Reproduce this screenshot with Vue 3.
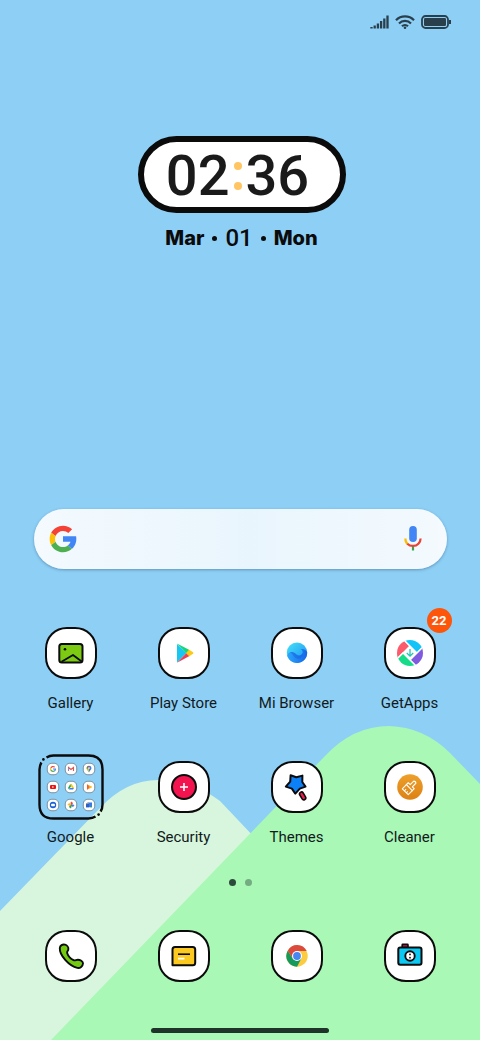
<script setup>
import { ref } from 'vue'

const query = ref('')
const page = ref(0)

const clock = { hours: '02', minutes: '36' }
const date = { month: 'Mar', day: '01', weekday: 'Mon' }

// outline shared by every app tile, 52x52
const tile =
  'M22 1H30C42 1 51 10 51 22V30C51 42 42 51 30 51H22C10 51 1 42 1 30V22C1 10 10 1 22 1Z'

const googleG = `
  <path fill="#f44336" d="M6.3 14.7l6.6 4.8C14.700 15.100 19 12 24 12c3.100 0 5.800 1.200 8 3l5.700-5.700C34 6 29.300 4 24 4 16.300 4 9.700 8.300 6.300 14.700z"/>
  <path fill="#4caf50" d="M24 44c5.200 0 9.900-2 13.400-5.200l-6.200-5.200C29.200 35.100 26.700 36 24 36c-5.200 0-9.600-3.300-11.300-7.900l-6.500 5C9.500 39.600 16.200 44 24 44z"/>
  <path fill="#fbc108" d="M6.300 14.700C4.800 17.400 4 20.600 4 24s.8 6.400 2.200 9.100l6.500-5c-.5-1.300-.7-2.700-.7-4.100 0-1.600.3-3.100.9-4.500z"/>
  <path fill="#4285f4" d="M43.600 20H24v8h11.300c-.8 2.200-2.200 4.200-4.100 5.600l6.200 5.200C37 39.200 44 34 44 24c0-1.300-.1-2.700-.4-4z"/>`

const apps = [
  {
    name: 'Gallery',
    art: `
      <rect x="14.300" y="17" width="23.200" height="18.500" rx="2.500" fill="#7ccb12" stroke="#0b0b0b" stroke-width="2"/>
      <circle cx="20" cy="22.200" r="1.300" fill="#0b0b0b"/>
      <path d="M16.500 34.800L28 28L37 34.800" fill="none" stroke="#0b0b0b" stroke-width="1.800" stroke-linejoin="round"/>`,
  },
  {
    name: 'Play Store',
    art: `
      <path fill="#18c6f2" d="M19 17v18.500L28.500 26z"/>
      <path fill="#15d67a" d="M19 16.600L31.500 23L28.500 26.300z"/>
      <path fill="#ef3d54" d="M19 35.800L31.500 29L28.500 26z"/>
      <path fill="#fdc912" d="M31.200 22.700L35 25.200Q35.800 26 35 26.800L31.200 29.300L28 26z"/>`,
  },
  {
    name: 'Mi Browser',
    art: `
      <defs>
        <linearGradient id="mi-a" x1="0" y1="0" x2="1" y2="1"><stop offset="0" stop-color="#45e3f7"/><stop offset="1" stop-color="#1b8df5"/></linearGradient>
        <linearGradient id="mi-b" x1="0" y1="0" x2="1" y2="0"><stop offset="0" stop-color="#2aa8fb"/><stop offset="1" stop-color="#1763e8"/></linearGradient>
      </defs>
      <circle cx="26" cy="25.700" r="10.200" fill="url(#mi-a)"/>
      <path d="M16.200 28.500C18 24 22 24.500 24.500 26.500C26 28 28 29 30 28C32.800 26.500 32 22.500 29 22C33.500 21.500 36 23.500 36.200 25.700C36.200 31.500 31.500 35.900 26 35.900C21.500 35.900 17.500 33 16.200 28.500Z" fill="url(#mi-b)"/>
      <path d="M19 25.200C22 24.500 24 26.800 26 28.200C28 29.200 31 28.500 31.500 25.500C32.500 29.500 29.500 32.500 26 31.500C22.500 30.500 22.500 27 19 25.200Z" fill="#1a5fe0" opacity=".5"/>`,
  },
  {
    name: 'GetApps',
    badge: 22,
    art: `
      <defs><clipPath id="get-c"><circle r="13"/></clipPath></defs>
      <g transform="translate(26 26)">
        <g clip-path="url(#get-c)" stroke="#fff" stroke-width="1.400">
          <path fill="#fb5b6b" d="M0-7L-7 0L-13 6H-20V-20H-13Z"/>
          <path fill="#10c4f7" transform="rotate(90)" d="M0-7L-7 0L-13 6H-20V-20H-13Z"/>
          <path fill="#7f5be0" transform="rotate(180)" d="M0-7L-7 0L-13 6H-20V-20H-13Z"/>
          <path fill="#16dc8a" transform="rotate(270)" d="M0-7L-7 0L-13 6H-20V-20H-13Z"/>
        </g>
        <path d="M0-4V3M-3.200 0L0 3.200L3.200 0" fill="none" stroke="#1fc7b6" stroke-width="1.300"/>
      </g>`,
  },
  { name: 'Google', folder: true },
  {
    name: 'Security',
    art: `
      <circle cx="26" cy="26" r="12" fill="#f2134f" stroke="#0b0b0b" stroke-width="2"/>
      <path d="M26 22V30M22 26H30" stroke="#fff" stroke-width="1.600"/>`,
  },
  {
    name: 'Themes',
    art: `
      <path d="M19.600 14.300L25.300 16.300L31.400 14.600L31.300 21L34.500 25.600L28.800 27.600L24.300 32.600L20.900 27.600L14.800 25.600L19.200 20.600Z" fill="#0c80f6" stroke="#0b0b0b" stroke-width="2" stroke-linejoin="round"/>
      <path d="M30.500 33L32.800 36.800" stroke="#0b0b0b" stroke-width="5.500" stroke-linecap="round"/>
      <path d="M30.500 33L32.800 36.800" stroke="#ee1c4e" stroke-width="2.400" stroke-linecap="round"/>`,
  },
  {
    name: 'Cleaner',
    art: `
      <defs><linearGradient id="cl" x1="0" y1="0" x2="0" y2="1"><stop offset="0" stop-color="#eda02b"/><stop offset="1" stop-color="#dd8113"/></linearGradient></defs>
      <circle cx="26" cy="26" r="12.800" fill="url(#cl)"/>
      <g transform="translate(25.500 26.500) rotate(45)" fill="none" stroke="#fff" stroke-width="1.100" stroke-linejoin="round">
        <path d="M-1.500-2.500V-7.500Q0-9 1.500-7.500V-2.500H4.200V.2H-4.200V-2.500Z"/>
        <path d="M-4.200 .2V6H4.200V.2M-1.300 6V3.500M1.500 6V4"/>
      </g>`,
  },
]

// contents of the Google folder, each drawn around its own centre
const folderItems = [
  `<g transform="scale(.15) translate(-24 -24)">${googleG}</g>`,
  '<path d="M-2.500 2V-1.500L0 .5L2.500-1.500V2" fill="none" stroke="#e0564c" stroke-width="1.100"/><path d="M-2.500 2V-1" stroke="#7b8fd8"/>',
  '<path d="M0 3.500C-.5 1.500-2.500 .8-2.500-1A2.500 2.500 0 0 1 0-3.300Z" fill="#2c9c55"/><path d="M0 3.500C.5 1.500 2.500 .8 2.500-1A2.500 2.500 0 0 0 0-3.300Z" fill="#3d7fee"/><path d="M-2.400-1.500L0-3.300V-1Z" fill="#e5483a"/><path d="M-2.300 0L0-1V3Z" fill="#f6bd19"/><circle cy="-.9" r=".8" fill="#fff"/>',
  '<rect x="-3" y="-2.100" width="6" height="4.200" rx="1" fill="#ee1212"/><path d="M-.7-1L1.100 0L-.7 1Z" fill="#fff"/>',
  '<path d="M-1-2.600H1L0-0.8L-2 2.600L-3 .9Z" fill="#1fa463"/><path d="M-1-2.600H1L3 .9H1Z" fill="#fbc70c"/><path d="M-2 2.600L-1 .9H3L2 2.600Z" fill="#3d7fee"/>',
  '<path d="M-2-2.800L3 0L-2 2.800Z" fill="#f68b1c"/><path d="M-2-2.800L0 0L-2 2.800Z" fill="#ef5a3c"/><path d="M.5-1.400L3 0L.5 1.400Z" fill="#fbc116"/>',
  '<circle r="3.200" fill="#1a62d8"/><rect x="-1.900" y="-1.200" width="3.800" height="2.400" rx=".8" fill="#fff"/>',
  '<path d="M0 0V-3A1.500 1.500 0 0 1 0 0Z" fill="#e8453c" stroke="#e8453c" stroke-width=".6"/><path d="M0 0H3A1.500 1.500 0 0 1 0 0Z" fill="#3d7fee" stroke="#3d7fee" stroke-width=".6"/><path d="M0 0V3A1.500 1.500 0 0 1 0 0Z" fill="#2ea350" stroke="#2ea350" stroke-width=".6"/><path d="M0 0H-3A1.500 1.500 0 0 1 0 0Z" fill="#fbbb10" stroke="#fbbb10" stroke-width=".6"/>',
  '<path d="M-3-1L-1-2.500H3V2.200H-3Z" fill="#3579ea"/><path d="M-3-1L-1-2.500L0-1V2.200H-3Z" fill="#2a5fc7"/><path d="M-2.600-.8L-.8-2.200L-.2-1.200Z" fill="#fbbb10"/><path d="M1.200 1.200H3V2.200H1.200Z" fill="#30a853"/>',
]

const dock = [
  {
    name: 'Phone',
    art: `<path d="M14.800 18C15 15.500 17.500 14 20 14.700C22 15.300 23.800 17.500 23.300 19.600C23 21.200 21.600 21.500 22.200 23.200C23.200 26 26 29 28.600 30.200C30.200 30.900 31 29.700 32.800 29.700C35 29.700 38.200 31.200 38 33.500C37.800 36.200 35.200 38.500 32.300 37.900C24.500 36.200 14.300 25.500 14.800 18Z" fill="#74c911" stroke="#0b0b0b" stroke-width="1.900"/>`,
  },
  {
    name: 'Messages',
    art: `
      <path d="M14.500 35.300V19.500Q14.500 17 17 17H34.700Q37.200 17 37.200 19.500V32.800Q37.200 35.300 34.700 35.300Z" fill="#fcc921" stroke="#0b0b0b" stroke-width="2" stroke-linejoin="round"/>
      <path d="M20 24.200H32" stroke="#0b0b0b" stroke-width="1.600"/>
      <path d="M20 28.600H26.500" stroke="#fff" stroke-width="1.800"/>`,
  },
  {
    name: 'Chrome',
    art: `
      <g transform="translate(26 26)">
        <circle r="10.700" fill="#fccb3f"/>
        <path d="M-9.270-5.350A10.700 10.700 0 0 1 9.700-5H0L-4.330 2.500Z" fill="#dc4a3e"/>
        <path d="M-9.270-5.350A10.700 10.700 0 0 0 0 10.700L4.330 2.500L-4.330 2.500Z" fill="#159a5b"/>
        <circle r="5" fill="#fff"/>
        <circle r="3.900" fill="#4886f2"/>
      </g>`,
  },
  {
    name: 'Camera',
    art: `
      <rect x="18.200" y="14.300" width="5.800" height="4" rx=".6" fill="#a3123f" stroke="#0b0b0b" stroke-width="1.600"/>
      <rect x="14.300" y="17.500" width="23.200" height="17.200" rx="2" fill="#0cc9f3" stroke="#0b0b0b" stroke-width="2"/>
      <circle cx="26" cy="26" r="4.700" fill="#fff" stroke="#0b0b0b" stroke-width="1.900"/>
      <circle cx="26" cy="24.400" r=".9" fill="#0b0b0b"/>
      <circle cx="26" cy="27.700" r=".9" fill="#0b0b0b"/>`,
  },
]
</script>

<template>
  <div class="home">
    <svg class="home__wallpaper" viewBox="0 0 480 1040" preserveAspectRatio="xMidYMax slice" aria-hidden="true">
      <rect width="480" height="1040" fill="#8ecff6" />
      <path fill="#d8f6dd" d="M0 911L100 808Q126 780 158 780Q192 780 220 801L290 875V1040H0Z" />
      <path fill="#a9f8b6" d="M51 1040L325 756Q353 726 389 726Q424 727 450 753L480 784V1040Z" />
    </svg>

    <header class="status">
      <svg width="19" height="14" viewBox="0 0 19 14" aria-label="Signal">
        <path
          d="M1.500 13.500V12M4.700 13.500V10.500M7.900 13.500V8.500M11.100 13.500V6M14.300 13.500V3.500M17.500 13.500V.5"
          stroke="#2a3f4c"
          stroke-width="2.300"
        />
      </svg>
      <svg width="20" height="14" viewBox="0 0 20 14" aria-label="Wi-Fi">
        <g fill="none" stroke="#2a3f4c" stroke-width="2.200">
          <path d="M1 5.200A12.500 12.500 0 0 1 19 5.200" />
          <path d="M4 8.400A8.300 8.300 0 0 1 16 8.400" />
          <path d="M7 11.200A4.300 4.300 0 0 1 13 11.200" />
        </g>
        <circle cx="10" cy="12.700" r="1.300" fill="#2a3f4c" />
      </svg>
      <svg width="31" height="14" viewBox="0 0 31 14" aria-label="Battery">
        <rect x="1" y="1" width="26" height="12" rx="3.500" fill="none" stroke="#2a3f4c" stroke-width="1.800" />
        <rect x="3" y="3" width="22" height="8" rx="1.200" fill="#2a3f4c" />
        <path d="M29 5V9" stroke="#2a3f4c" stroke-width="2" />
      </svg>
    </header>

    <section class="clock">
      <div class="clock__pill">
        <span>{{ clock.hours }}</span>
        <span class="clock__colon"><i></i><i></i></span>
        <span>{{ clock.minutes }}</span>
      </div>
      <p class="clock__date">
        <b>{{ date.month }}</b>
        <i></i>
        <span>{{ date.day }}</span>
        <i></i>
        <b>{{ date.weekday }}</b>
      </p>
    </section>

    <form class="search" @submit.prevent>
      <svg width="32" height="32" viewBox="0 0 48 48" aria-hidden="true" v-html="googleG"></svg>
      <input v-model="query" class="search__input" type="text" aria-label="Search" />
      <button class="search__mic" type="button" aria-label="Voice search">
        <svg width="20" height="28" viewBox="0 0 20 28" aria-hidden="true">
          <rect x="6.200" y="1" width="7.600" height="16" rx="3.800" fill="#4285f4" />
          <path d="M10 20V25.500" stroke="#34a853" stroke-width="2.200" />
          <path d="M2.400 13.500C2.400 16 3.300 18 4.600 19" fill="none" stroke="#fbbc05" stroke-width="2.200" />
          <path d="M4.300 18.700C7.300 21.700 12.700 21.700 15.400 18.700C16.800 17.200 17.600 15.500 17.600 13.500" fill="none" stroke="#ea4335" stroke-width="2.200" />
        </svg>
      </button>
    </form>

    <main class="apps">
      <button v-for="app in apps" :key="app.name" class="app" type="button">
        <span class="app__icon">
          <svg v-if="app.folder" width="66" height="66" viewBox="0 0 66 66" aria-hidden="true">
            <g fill="none" stroke="#0b0b0b" stroke-width="2.400">
              <path d="M8.500 3.400Q11.500 1.500 15.500 1.500H50.500Q64.500 1.500 64.500 15.500V50.500Q64.500 54.500 62.600 57.500" />
              <path d="M57.500 62.600Q54.500 64.500 50.500 64.500H15.500Q1.500 64.500 1.500 50.500V15.500Q1.500 11.500 3.400 8.500" />
            </g>
            <circle cx="5.400" cy="5.400" r="1.300" fill="#0b0b0b" />
            <circle cx="60.600" cy="60.600" r="1.300" fill="#0b0b0b" />
            <g
              v-for="(item, i) in folderItems"
              :key="i"
              :transform="`translate(${15 + (i % 3) * 18} ${15 + Math.floor(i / 3) * 18})`"
            >
              <rect x="-5.700" y="-5.700" width="11.400" height="11.400" rx="4.500" fill="#fff" stroke="#4b5560" stroke-width=".6" />
              <g v-html="item"></g>
            </g>
          </svg>
          <svg v-else width="52" height="52" viewBox="0 0 52 52" aria-hidden="true">
            <path :d="tile" fill="#fff" stroke="#0b0b0b" stroke-width="2" />
            <g v-html="app.art"></g>
          </svg>
          <span v-if="app.badge" class="app__badge">{{ app.badge }}</span>
        </span>
        <span class="app__label">{{ app.name }}</span>
      </button>
    </main>

    <nav class="pager" aria-label="Pages">
      <button
        v-for="n in 2"
        :key="n"
        class="pager__dot"
        :class="{ 'pager__dot--active': page === n - 1 }"
        type="button"
        :aria-label="`Page ${n}`"
        @click="page = n - 1"
      ></button>
    </nav>

    <footer class="dock">
      <button v-for="app in dock" :key="app.name" class="app" type="button" :aria-label="app.name">
        <span class="app__icon">
          <svg width="52" height="52" viewBox="0 0 52 52" aria-hidden="true">
            <path :d="tile" fill="#fff" stroke="#0b0b0b" stroke-width="2" />
            <g v-html="app.art"></g>
          </svg>
        </span>
      </button>
    </footer>

    <div class="home__bar"></div>
  </div>
</template>

<style>
body {
  margin: 0;
}
</style>

<style scoped>
.home {
  position: relative;
  z-index: 0;
  display: flex;
  flex-direction: column;
  min-height: 100vh;
  box-sizing: border-box;
  padding-bottom: 7px;
  overflow: hidden;
  font-family: Roboto, sans-serif;
  color: #111a20;
}

.home__wallpaper {
  position: absolute;
  inset: 0;
  z-index: -1;
  width: 100%;
  height: 100%;
}

.home__bar {
  width: 37%;
  height: 5px;
  margin: 39px auto 0;
  border-radius: 3px;
  background: #20332a;
}

button {
  padding: 0;
  border: none;
  background: none;
  font: inherit;
  color: inherit;
  cursor: pointer;
}

svg {
  display: block;
}

.status {
  display: flex;
  justify-content: flex-end;
  gap: 6px;
  padding: 15px 28px 0;
}

.clock {
  display: flex;
  flex-direction: column;
  align-items: center;
  margin-top: 107px;
  padding-left: 3px;
  color: #0b0b0b;
}

.clock__pill {
  display: flex;
  align-items: center;
  justify-content: center;
  gap: 4px;
  box-sizing: border-box;
  width: 208px;
  height: 77px;
  padding: 2px 8px 0 0;
  border: 6px solid #0b0b0b;
  border-radius: 39px;
  background: #fff;
  color: #1a1a1a;
  font: 500 56px/64px Roboto, sans-serif;
}

.clock__colon {
  display: flex;
  flex-direction: column;
  gap: 12px;
}

.clock__colon i {
  width: 8px;
  height: 8px;
  border-radius: 50%;
  background: #ffc562;
}

.clock__date {
  display: flex;
  align-items: center;
  gap: 8px;
  margin: 12px 0 0;
  line-height: 24px;
}

.clock__date b {
  font: 800 20px/24px Inter, sans-serif;
}

.clock__date span {
  font: 500 24px/26px Roboto, sans-serif;
}

.clock__date i {
  width: 5px;
  height: 5px;
  border-radius: 50%;
  background: #0b0b0b;
}

.search {
  display: flex;
  align-items: center;
  height: 60px;
  margin: auto 33px 0 34px;
  padding: 0 24px 0 13px;
  border-radius: 30px;
  background: linear-gradient(90deg, #f4fafe, #e9f5fd 52%, #f4fafe);
  box-shadow: 0 1px 3px rgba(40, 80, 110, 0.45);
}

.search__input {
  flex: 1;
  min-width: 0;
  padding: 0 12px;
  border: none;
  outline: none;
  background: transparent;
  font: inherit;
  font-size: 16px;
}

.apps,
.dock {
  display: grid;
  grid-template-columns: repeat(4, 1fr);
  padding: 0 14px;
}

.apps {
  row-gap: 41px;
  margin-top: 51px;
}

.dock {
  margin-top: 37px;
}

.app {
  display: flex;
  flex-direction: column;
  align-items: center;
  gap: 7px;
}

.app__icon {
  position: relative;
  display: grid;
  place-items: center;
  width: 66px;
  height: 66px;
}

.app__badge {
  position: absolute;
  top: -12px;
  right: -9px;
  width: 25px;
  height: 25px;
  border-radius: 50%;
  background: #fd560b;
  color: #fff;
  font-size: 13px;
  font-weight: 700;
  line-height: 25px;
  text-align: center;
}

.app__label {
  font-size: 15px;
  line-height: 20px;
  white-space: nowrap;
}

.pager {
  display: flex;
  justify-content: center;
  gap: 9px;
  margin-top: 32px;
}

.pager__dot {
  width: 7px;
  height: 7px;
  border-radius: 50%;
  background: #74ac82;
}

.pager__dot--active {
  background: #2c4a3b;
}
</style>
